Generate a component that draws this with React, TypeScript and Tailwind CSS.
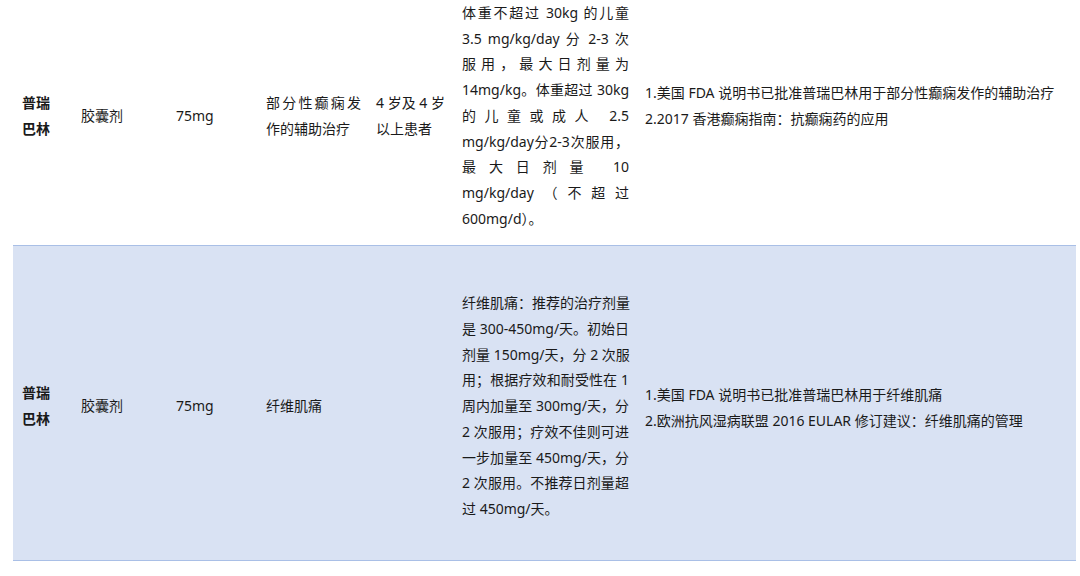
import React from "react";

type Line = { text: string; justify?: boolean };

const rows: {
  name: string;
  form: string;
  dose: string;
  indication: string;
  age?: string;
  usage: Line[];
  refs: string[];
  refsLift?: boolean;
  shaded?: boolean;
}[] = [
  {
    name: "普瑞巴林",
    form: "胶囊剂",
    dose: "75mg",
    indication: "部分性癫痫发作的辅助治疗",
    age: "4 岁及 4 岁以上患者",
    usage: [
      { text: "体重不超过 30kg 的儿童", justify: true },
      { text: "3.5 mg/kg/day 分 2-3 次", justify: true },
      { text: "服用，最大日剂量为", justify: true },
      { text: "14mg/kg。体重超过 30kg", justify: true },
      { text: "的儿童或成人 2.5", justify: true },
      { text: "mg/kg/day分2-3次服用，", justify: true },
      { text: "最大日剂量 10", justify: true },
      { text: "mg/kg/day（不超过", justify: true },
      { text: "600mg/d）。" },
    ],
    refs: [
      "1.美国 FDA 说明书已批准普瑞巴林用于部分性癫痫发作的辅助治疗",
      "2.2017  香港癫痫指南：抗癫痫药的应用",
    ],
    refsLift: true,
  },
  {
    name: "普瑞巴林",
    form: "胶囊剂",
    dose: "75mg",
    indication: "纤维肌痛",
    usage: [
      { text: "纤维肌痛：推荐的治疗剂量", justify: true },
      { text: "是 300-450mg/天。初始日", justify: true },
      { text: "剂量 150mg/天，分 2 次服", justify: true },
      { text: "用；根据疗效和耐受性在 1", justify: true },
      { text: "周内加量至 300mg/天，分", justify: true },
      { text: "2 次服用；疗效不佳则可进", justify: true },
      { text: "一步加量至 450mg/天，分", justify: true },
      { text: "2 次服用。不推荐日剂量超", justify: true },
      { text: "过 450mg/天。" },
    ],
    refs: [
      "1.美国 FDA 说明书已批准普瑞巴林用于纤维肌痛",
      "2.欧洲抗风湿病联盟 2016 EULAR 修订建议：纤维肌痛的管理",
    ],
    shaded: true,
  },
];

export default function App() {
  return (
    <div
      className="w-[1080px] h-[576px] overflow-hidden bg-white text-[14px] leading-[25.7px] text-[#1a1a1a]"
      style={{ fontFamily: '"Noto Sans", "Noto Sans CJK SC", sans-serif' }}
    >
      <div className="-mt-[12px] ml-[13px] w-[1063px] flex flex-col">
        {rows.map((r, i) => (
          <div
            key={i}
            className={`grid grid-cols-[59px_95px_90px_110px_86px_184px_1fr] items-center border-b border-[#a9bfe6] ${
              r.shaded ? "bg-[#d9e2f3] pt-[44px] pb-[38px]" : "pt-[12px] pb-[14px]"
            }`}
          >
            <div className="pl-[9px] pr-[16px] font-bold">{r.name}</div>
            <div className="pl-[9px]">{r.form}</div>
            <div className="pl-[9px]">{r.dose}</div>
            <div className="pl-[9px] pr-[6px] text-justify">{r.indication}</div>
            <div className="pl-[9px] pr-[8px] text-justify">{r.age}</div>
            <div className="pl-[9px] pr-[8px]">
              {r.usage.map((l, j) => (
                <div
                  key={j}
                  className={`whitespace-nowrap ${l.justify ? "text-justify [text-align-last:justify]" : ""}`}
                >
                  {l.text}
                </div>
              ))}
            </div>
            <div className={`pl-[8px] ${r.refsLift ? "pb-[20px]" : "pt-[4px]"}`}>
              {r.refs.map((t, j) => (
                <div key={j} className="whitespace-nowrap">
                  {t}
                </div>
              ))}
            </div>
          </div>
        ))}
      </div>
    </div>
  );
}
